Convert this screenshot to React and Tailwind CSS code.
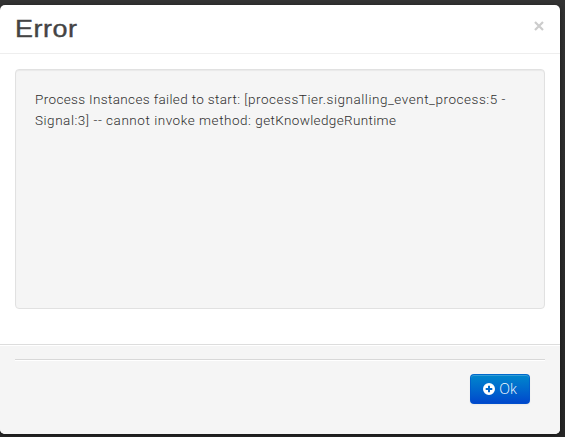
function PlusCircle() {
  return (
    <svg width="12" height="12" viewBox="0 0 12 12" className="shrink-0" aria-hidden="true">
      <path
        fillRule="evenodd"
        fill="#fff"
        d="M6 0a6 6 0 1 0 0 12A6 6 0 0 0 6 0ZM5 2.7h2V5h2.3v2H7v2.3H5V7H2.7V5H5Z"
      />
    </svg>
  );
}

function CloseIcon() {
  return (
    <svg width="10" height="10" viewBox="0 0 10 10" aria-hidden="true">
      <path d="M1 1l8 8M9 1L1 9" stroke="#ccc" strokeWidth="2.2" fill="none" />
    </svg>
  );
}

export default function App() {
  return (
    <div className="h-[437px] w-[565px] overflow-hidden bg-linear-to-b from-[#333] to-[#272727] pt-[5px] font-[Roboto,sans-serif] text-[#444]">
      <div className="flex h-[429px] w-[560px] flex-col overflow-hidden rounded-[5px] bg-white shadow-[0_1px_4px_rgba(0,0,0,0.5)]">
        <header className="flex h-[49px] shrink-0 items-start justify-between border-b border-[#eee] pr-[16px] pl-[15px]">
          <h3 className="origin-left scale-x-[1.1] pt-[4px] font-['Liberation_Sans',Arial,sans-serif] text-[24.5px] leading-[40px] font-normal tracking-[0.5px] [-webkit-text-stroke:0.4px_#444]">
            Error
          </h3>
          <button className="mt-[16px] block" aria-label="Close">
            <CloseIcon />
          </button>
        </header>
        <main className="h-[290px] shrink-0 px-[15px] pt-[15px]">
          <div className="h-[240px] rounded-[4px] border border-[#e1e1e1] bg-[#f5f5f5] px-[19px] pt-[19px] text-[13.5px] leading-[21px] font-[350] whitespace-nowrap text-[#2e2e2e] shadow-[inset_0_1px_1px_rgba(0,0,0,0.05)]">
            <p className="tracking-[0.54px]">
              <span className="tracking-[0.36px]">Process Instances failed to start: </span>
              [processTier.signalling_event_process:5 -
            </p>
            <p className="tracking-[0.54px]">
              Signal:3] -- cannot invoke method:{' '}
              <span className="tracking-[0.36px]">getKnowledgeRuntime</span>
            </p>
          </div>
        </main>
        <footer className="flex-1 border-t border-[#ddd] bg-[#f5f5f5] px-[15px] pt-[14px] shadow-[inset_0_1px_0_#fff]">
          <hr className="h-[2px] border-t border-b border-t-[#d8d8d8] border-b-white" />
          <div className="flex justify-end pt-[13px] pr-[15px]">
            <button className="flex h-[30px] w-[60px] items-center justify-center gap-[4px] rounded-[4px] border border-[#0055cc]/60 bg-linear-to-b from-[#0088cc] to-[#0044cc] bg-origin-border text-[13px] leading-[20px] text-white shadow-[inset_0_1px_0_rgba(255,255,255,0.2),0_1px_2px_rgba(0,0,0,0.05)]">
              <PlusCircle />
              <span className="font-['Open_Sans',sans-serif] text-[14px] font-light">Ok</span>
            </button>
          </div>
        </footer>
      </div>
    </div>
  );
}
